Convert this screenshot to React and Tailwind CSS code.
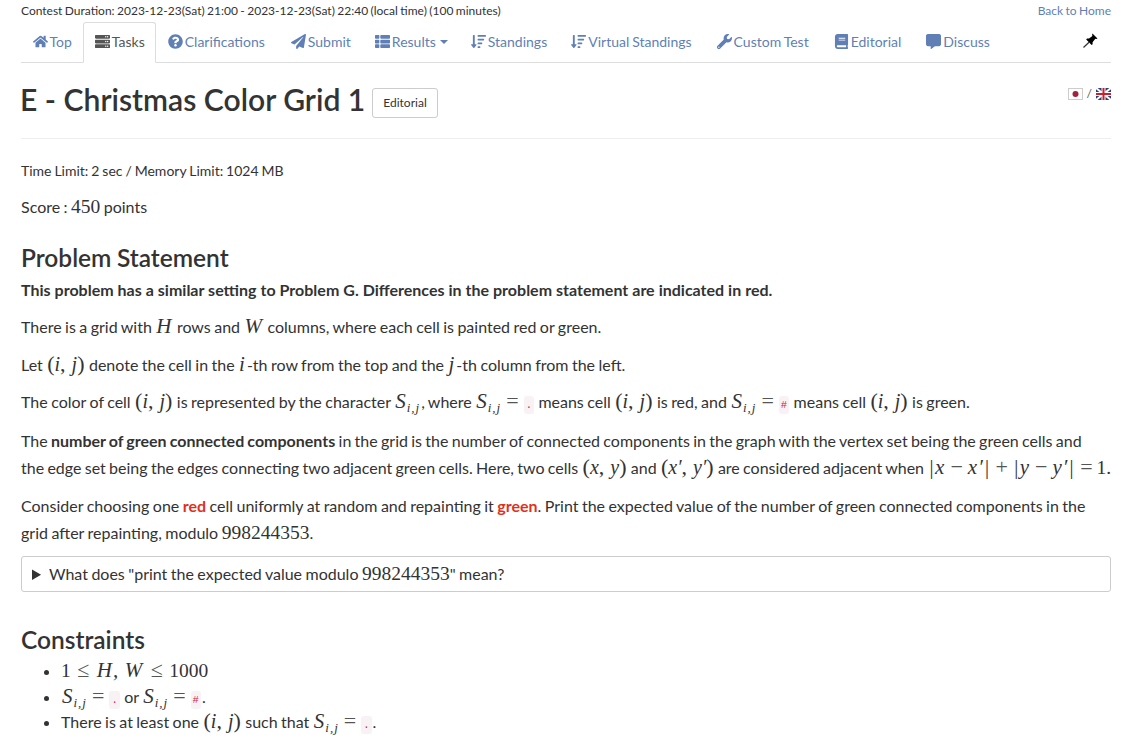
import { FaHome, FaServer, FaQuestionCircle, FaPaperPlane, FaThList, FaSortAmountDown, FaWrench, FaBook, FaCommentAlt } from "react-icons/fa";

const navItems = [
  { label: "Top", icon: FaHome, gap: "" },
  { label: "Tasks", icon: FaServer, active: true, gap: "" },
  { label: "Clarifications", icon: FaQuestionCircle, gap: "" },
  { label: "Submit", icon: FaPaperPlane, gap: "ml-[3px]" },
  { label: "Results", icon: FaThList, caret: true, gap: "ml-[1px]" },
  { label: "Standings", icon: FaSortAmountDown, gap: "" },
  { label: "Virtual Standings", icon: FaSortAmountDown, gap: "ml-[1px]" },
  { label: "Custom Test", icon: FaWrench, gap: "ml-[2px]" },
  { label: "Editorial", icon: FaBook, gap: "ml-[2px]" },
  { label: "Discuss", icon: FaCommentAlt, gap: "ml-[2px]" },
];

function M({ children }) {
  return <span className="mx-[1px] font-['Liberation_Serif',serif] text-[21px] leading-[20px] tracking-[1px] italic text-[#333]">{children}</span>;
}

function N({ children }) {
  return <span className="font-['Liberation_Serif',serif] text-[19.5px] leading-[20px] text-[#333]">{children}</span>;
}

function Op({ children, wide }) {
  return <span className={`font-['Liberation_Serif',serif] text-[22px] leading-[20px] text-[#555] ${wide ? "mx-[6.5px]" : "mx-[4px]"}`}>{children}</span>;
}

function Sij() {
  return (
    <span className="mx-[1px] font-['Liberation_Serif',serif] text-[21px] leading-[20px] italic text-[#333]">
      S<sub className="ml-[1px] -bottom-[4px] text-[13px] leading-none tracking-[1px]">i,j</sub>
    </span>
  );
}

function Paren({ a, b }) {
  return (
    <span className="mx-[1px] font-['Liberation_Serif',serif] text-[22px] leading-[20px] text-[#333]">
      (<span className="text-[20px] italic">{a}</span>,<span className="ml-[6px] text-[20px] italic">{b}</span>)
    </span>
  );
}

function Code({ children }) {
  return (
    <code className="mx-[1px] rounded-[3px] bg-[#f9f2f4] px-[2px] py-[3px] font-['Liberation_Mono',monospace] text-[10.5px] text-[#c7254e]">
      {children}
    </code>
  );
}

function Red({ children }) {
  return <strong className="font-bold text-[#e0301e]">{children}</strong>;
}

export default function App() {
  return (
    <div className="min-h-[752px] overflow-hidden bg-white font-['Lato',sans-serif] text-[16px] leading-[27px] [word-spacing:-0.65px] text-[#333]">
      <div className="mx-[21px] w-[1090px]">
        <div className="flex h-[22px] items-start justify-between pt-[2px] text-[12px] leading-[17px]">
          <span>Contest Duration: 2023-12-23(Sat) 21:00 - 2023-12-23(Sat) 22:40 (local time) (100 minutes)</span>
          <a className="text-[#5f7fb5]">Back to Home</a>
        </div>

        {/* Nav tabs */}
        <div className="flex h-[41px] items-stretch border-b border-[#ddd] text-[14px] leading-[20px] text-[#5f7fb5]">
          {navItems.map((item) => {
            const Icon = item.icon;
            return (
              <a
                key={item.label}
                className={`mb-[-1px] flex items-center gap-[2px] rounded-t-[3px] border px-[10.5px] pb-[2px] ${item.gap} ${
                  item.active
                    ? "border-[#ddd] border-b-white bg-white text-[#555]"
                    : "border-transparent"
                }`}
              >
                <Icon className="text-[15px]" />
                {item.label}
                {item.caret && <span className="ml-[2px] h-0 w-0 border-x-[4px] border-t-[4px] border-x-transparent border-t-[#5f7fb5]" />}
              </a>
            );
          })}
          <div className="ml-auto flex items-center pr-[13px] pb-[3px]">
            <svg width="15" height="15" viewBox="0 0 15 15">
              <path d="M9.5 0.5L14.5 5.5L13.3 6L12.3 5.8L9.6 9.2L9.6 11.2L8.6 12L3.2 6.6L4 5.6L6 5.6L9.4 2.9L9.1 1.8Z" fill="#000" />
              <path d="M6 9.2L0.5 14.5" stroke="#333" strokeWidth="1.2" />
            </svg>
          </div>
        </div>

        {/* Title */}
        <div className="flex h-[76px] items-start justify-between border-b border-[#eee]">
          <div className="mt-[20px] flex items-start [word-spacing:0]">
            <h2 className="-ml-[1px] text-[30.1px] leading-[33px] font-semibold">E - Christmas Color Grid 1</h2>
            <a className="mt-[5px] ml-[7px] rounded-[3px] border border-[#ccc] px-[10px] py-[6px] text-[12px] leading-[16px]">Editorial</a>
          </div>
          <div className="mt-[24px] flex items-center gap-[4px] text-[12px] leading-[14px] text-[#555]">
            <svg width="15" height="12" viewBox="0 0 15 12">
              <rect x="0.5" y="0.5" width="14" height="11" fill="#fff" stroke="#ccc" />
              <circle cx="7.5" cy="6" r="3" fill="#a3213f" />
            </svg>
            /
            <svg width="15" height="12" viewBox="0 0 15 12">
              <rect width="15" height="12" fill="#2b3f7f" />
              <path d="M0 0L15 12M15 0L0 12" stroke="#fff" strokeWidth="2" />
              <path d="M7.5 0V12M0 6H15" stroke="#fff" strokeWidth="4" />
              <path d="M7.5 0V12M0 6H15" stroke="#c8202f" strokeWidth="2" />
            </svg>
          </div>
        </div>

        <p className="mt-[22px] text-[14px] leading-[20px]">Time Limit: 2 sec / Memory Limit: 1024 MB</p>
        <p className="mt-[12px]">
          Score : <N>450</N> points
        </p>

        <h3 className="mt-[25px] text-[24.5px] leading-[26px] font-semibold">Problem Statement</h3>
        <p className="mt-[5px] font-bold [word-spacing:0.1px]">
          This problem has a similar setting to Problem G. Differences in the problem statement are indicated in red.
        </p>
        <p className="mt-[10px]">
          There is a grid with <M>H</M> rows and <M>W</M> columns, where each cell is painted red or green.
        </p>
        <p className="mt-[11px]">
          Let <Paren a="i" b="j" /> denote the cell in the <M>i</M>-th row from the top and the <M>j</M>-th column from the left.
        </p>
        <p className="mt-[10px]">
          The color of cell <Paren a="i" b="j" /> is represented by the character <Sij />, where <Sij /><Op>=</Op><Code>.</Code> means cell <Paren a="i" b="j" /> is red, and <Sij /><Op>=</Op><Code>#</Code> means cell <Paren a="i" b="j" /> is green.
        </p>
        <p className="mt-[8px] -mr-[12px] [word-spacing:-0.8px]">
          The <strong className="font-bold">number of green connected components</strong> in the grid is the number of connected components in the graph with the vertex set being the green cells and
          <br />
          the edge set being the edges connecting two adjacent green cells. Here, two cells <Paren a="x" b="y" /> and <Paren a="x′" b="y′" /> are considered adjacent when <span className="whitespace-nowrap"><M>|x</M><Op>−</Op><M>x′|</M><Op>+</Op><M>|y</M><Op>−</Op><M>y′|</M><Op>=</Op><N>1.</N></span>
        </p>
        <p className="mt-[11px]">
          Consider choosing one <Red>red</Red> cell uniformly at random and repainting it <Red>green</Red>. Print the expected value of the number of green connected components in the grid after repainting, modulo <N>998244353</N>.
        </p>

        <details className="mt-[10px] h-[36px] rounded-[3px] border border-[#ccc] px-[10px] leading-[34px]">
          <summary className="cursor-pointer">
            What does "print the expected value modulo <N>998244353</N>" mean?
          </summary>
        </details>

        <h3 className="mt-[35px] text-[24.5px] leading-[26px] font-semibold">Constraints</h3>
        <ul className="mt-[5px] ml-[40px] list-disc leading-[25.5px]">
          <li className="h-[25.5px]">
            <N>1</N><Op wide>≤</Op><M>H,</M> <M>W</M><Op wide>≤</Op><N>1000</N>
          </li>
          <li className="h-[25.5px]">
            <Sij /><Op>=</Op><Code>.</Code> or <Sij /><Op>=</Op><Code>#</Code>.
          </li>
          <li className="h-[25.5px]">
            There is at least one <Paren a="i" b="j" /> such that <Sij /><Op>=</Op><Code>.</Code>.
          </li>
        </ul>
      </div>
    </div>
  );
}
